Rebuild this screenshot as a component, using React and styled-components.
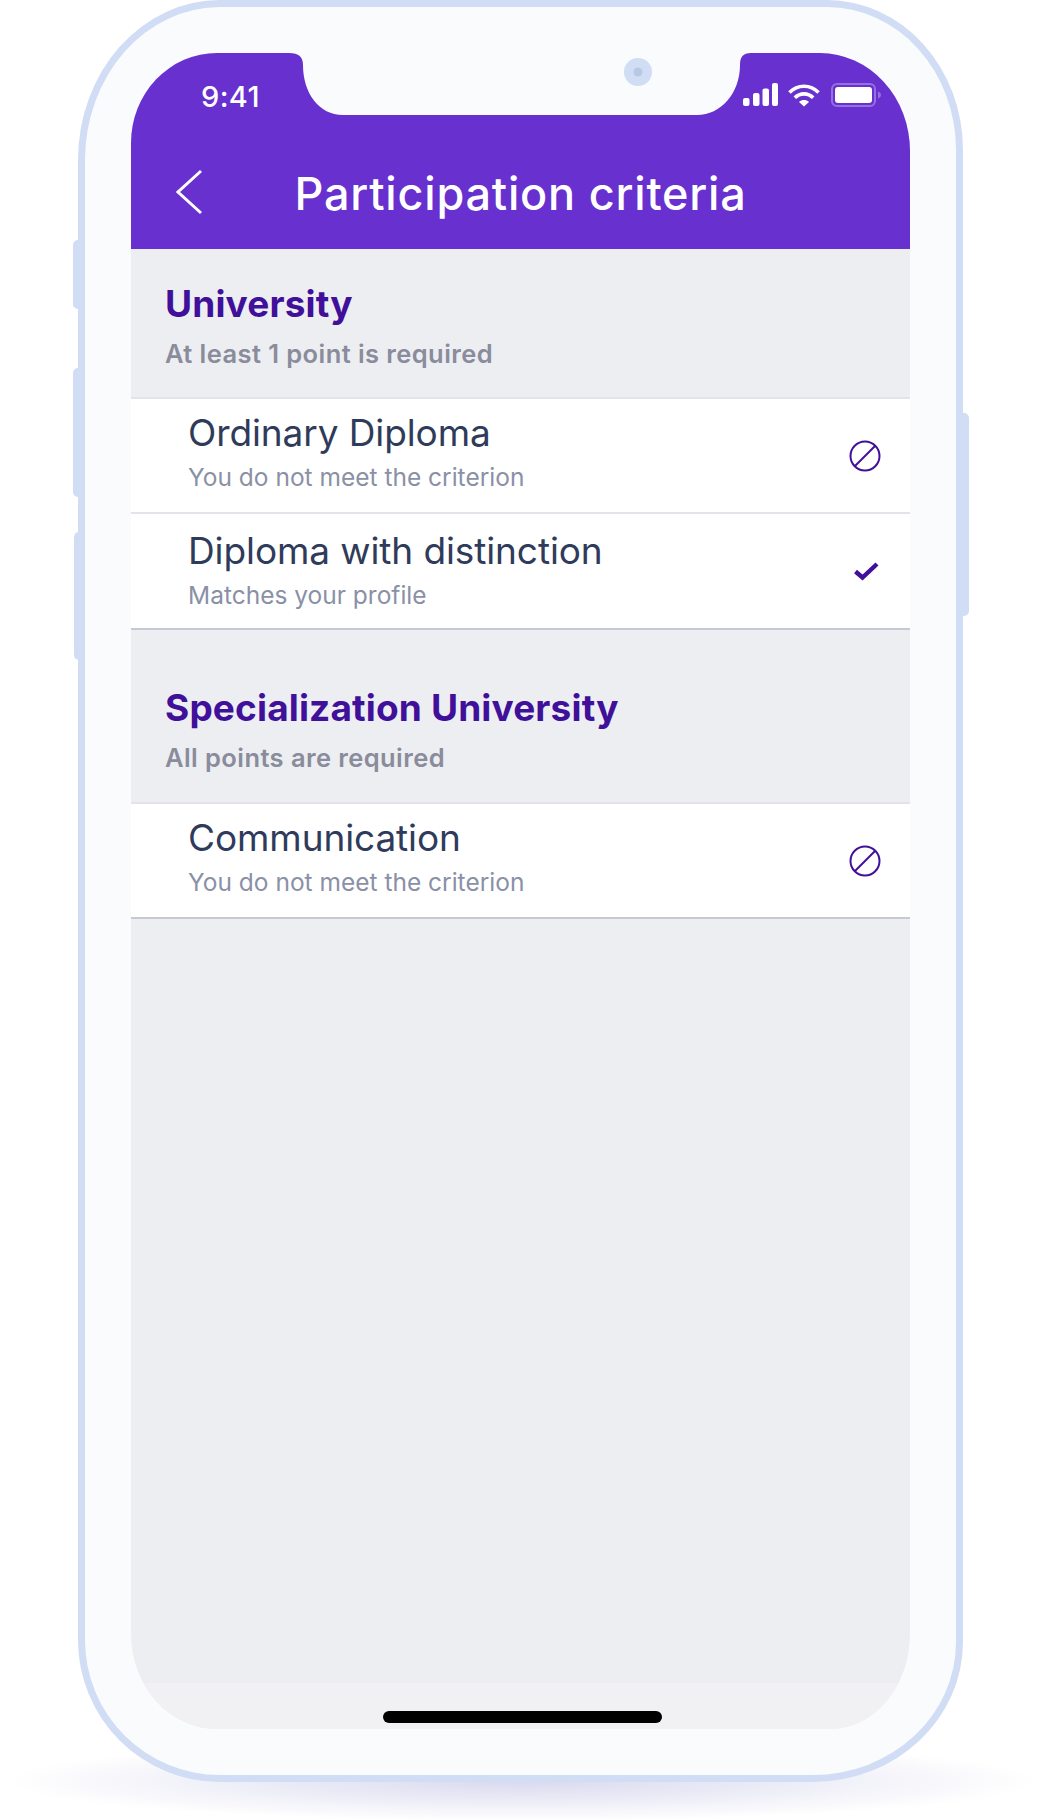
import React from "react";
import styled, { createGlobalStyle } from "styled-components";

const Global = createGlobalStyle`
  html, body { margin: 0; padding: 0; background: #fff; }
  * { box-sizing: border-box; }
`;

const Page = styled.div`
  position: relative;
  width: 1043px;
  height: 1820px;
  overflow: hidden;
  background: #fff;
  padding-left: 78px;
  font-family: Inter, "Liberation Sans", sans-serif;
`;

const GroundShadow = styled.div`
  position: absolute;
  left: 0;
  top: 1730px;
  width: 1043px;
  height: 90px;
  background: radial-gradient(ellipse 515px 40px at 50% 51px, rgba(186, 186, 226, 0.55), rgba(186, 186, 226, 0) 100%);
`;

const SideButton = styled.div`
  position: absolute;
  top: ${(p) => p.$top}px;
  height: ${(p) => p.$height}px;
  width: 12px;
  background: #d0ddf4;
  ${(p) =>
    p.$right
      ? `left: 957px; border-radius: 0 5px 5px 0;`
      : `left: ${p.$left}px; border-radius: 5px 0 0 5px;`}
`;

const Phone = styled.div`
  position: relative;
  width: 885px;
  height: 1782px;
  border: 7px solid #d0ddf4;
  border-radius: 142px 136px 150px 142px / 160px 150px 140px 142px;
  background: #fafbfd;
  padding: 46px;
`;

const Screen = styled.div`
  position: relative;
  height: 100%;
  display: flex;
  flex-direction: column;
  overflow: hidden;
  background: #edeef2;
  border-radius: 86px 90px 80px 86px / 90px 98px 95px 95px;
`;

const Notch = styled.svg`
  position: absolute;
  left: 158px;
  top: 0;
  display: block;
`;

const Header = styled.header`
  flex: none;
  height: 196px;
  background: #6730cf;
  color: #fff;
  display: flex;
  flex-direction: column;
`;

const StatusBar = styled.div`
  height: 62px;
  display: flex;
  justify-content: space-between;
  padding: 30px 29px 0 70px;
`;

const Time = styled.span`
  font-size: 29px;
  line-height: 27px;
  font-weight: 500;
  letter-spacing: 0.4px;
`;

const StatusIcons = styled.div`
  display: flex;
  align-items: flex-start;
`;

const Signal = styled.svg`
  display: block;
  margin-right: 10px;
`;

const Wifi = styled.svg`
  display: block;
  margin-right: 11px;
`;

const Nav = styled.div`
  flex: 1;
  display: grid;
  grid-template-columns: 1fr auto 1fr;
  align-items: center;
  padding-top: 24px;
`;

const Back = styled.svg`
  display: block;
  margin-left: 45px;
  margin-top: -5px;
`;

const Title = styled.h1`
  margin: 0;
  font-size: 45px;
  line-height: 52px;
  font-weight: 500;
  letter-spacing: 0.8px;
  white-space: nowrap;
`;

const Section = styled.section`
  display: flex;
  flex-direction: column;
`;

const SectionHead = styled.div`
  padding: ${(p) => p.$top}px 34px 0;
  height: ${(p) => p.$height}px;
`;

const SectionTitle = styled.h2`
  margin: 0;
  font-size: 37px;
  line-height: 44px;
  font-weight: 700;
  letter-spacing: 0.15px;
  color: #40109a;
  white-space: nowrap;
`;

const SectionSub = styled.div`
  margin-top: 12px;
  font-size: 25.5px;
  line-height: 32px;
  font-weight: 600;
  letter-spacing: 0.42px;
  color: #8a8c9c;
`;

const Row = styled.div`
  height: ${(p) => p.$height}px;
  background: #fff;
  border-top: 2px solid #e3e3ea;
  border-bottom: ${(p) => (p.$last ? "2px solid #c8c8d3" : "none")};
  display: flex;
  align-items: center;
  justify-content: space-between;
  padding: 0 29px 0 57px;
`;

const RowText = styled.div`
  display: flex;
  flex-direction: column;
  padding-bottom: ${(p) => p.$lift}px;
`;

const RowTitle = styled.div`
  font-size: 37px;
  line-height: 44px;
  font-weight: 400;
  letter-spacing: -0.1px;
  color: #2f3b5a;
  white-space: nowrap;
`;

const RowSub = styled.div`
  margin-top: 7px;
  font-size: 24.5px;
  line-height: 31px;
  font-weight: 400;
  color: #8a90a6;
  white-space: nowrap;
`;

const RowIcon = styled.svg`
  display: block;
  flex: none;
`;

const Filler = styled.div`
  flex: 1;
`;

const HomeArea = styled.div`
  flex: none;
  height: 46px;
  background: #f1f1f4;
  display: flex;
  justify-content: center;
  padding: 28px 0 0 4px;
`;

const HomeBar = styled.div`
  width: 279px;
  height: 12px;
  border-radius: 6px;
  background: #000;
`;

const BanIcon = () => (
  <RowIcon width="32" height="32" viewBox="0 0 32 32" fill="none" stroke="#40109a" strokeWidth="2">
    <circle cx="16" cy="16" r="14.5" />
    <path d="M6 26 26 6" />
  </RowIcon>
);

const CheckIcon = () => (
  <RowIcon width="32" height="32" viewBox="0 0 32 32" fill="none" stroke="#40109a" strokeWidth="4.4">
    <path d="M6.500 16.500 13.500 22.500 28 9" />
  </RowIcon>
);

const Item = ({ title, sub, icon, height, last, lift }) => (
  <Row $height={height} $last={last}>
    <RowText $lift={lift}>
      <RowTitle>{title}</RowTitle>
      <RowSub>{sub}</RowSub>
    </RowText>
    {icon === "check" ? <CheckIcon /> : <BanIcon />}
  </Row>
);

export default function App() {
  return (
    <Page>
      <Global />
      <GroundShadow />
      <SideButton $left={73} $top={240} $height={69} />
      <SideButton $left={73} $top={368} $height={129} />
      <SideButton $left={74} $top={532} $height={128} />
      <SideButton $right $top={413} $height={203} />
      <Phone>
        <Screen>
          <Header>
            <StatusBar>
              <Time>9:41</Time>
              <StatusIcons>
                <Signal width="35" height="23" viewBox="0 0 35 23" fill="#fff">
                  <rect x="0" y="15" width="6.5" height="8" rx="2" />
                  <rect x="10" y="10" width="6.5" height="13" rx="2" />
                  <rect x="19.5" y="5.5" width="6.5" height="17.5" rx="2" />
                  <rect x="29" y="0" width="6" height="23" rx="2" />
                </Signal>
                <Wifi width="32" height="24" viewBox="0 0 32 24" fill="none" stroke="#fff" strokeWidth="3.6">
                  <path d="M1.5 9.5C9.5 1.2 22.5 1.2 30.5 9.5" />
                  <path d="M6.8 14.8C12 9.5 20 9.5 25.2 14.8" />
                  <path d="M11 19 16 23.5 21 19C18 16.4 14 16.4 11 19Z" fill="#fff" stroke="none" />
                </Wifi>
                <svg width="50" height="24" viewBox="0 0 50 24" fill="none">
                  <rect x="1" y="1" width="43" height="22" rx="5" stroke="#9470e0" strokeWidth="2" />
                  <rect x="4" y="4" width="37" height="16" rx="3" fill="#fff" />
                  <path d="M47 8.5C49 9.5 50 10.5 50 12S49 14.500 47 15.500Z" fill="#9470e0" />
                </svg>
              </StatusIcons>
            </StatusBar>
            <Nav>
              <Back width="26" height="46" viewBox="0 0 26 46" fill="none" stroke="#fff" strokeWidth="3">
                <path d="M25 2 2 23 25 44" />
              </Back>
              <Title>Participation criteria</Title>
              <span />
            </Nav>
          </Header>
          <Notch width="462" height="62" viewBox="0 0 462 62" fill="#fafbfd">
            <path d="M0 0H462C454 0 451 4 451 12C451 40 432 62 408 62H54C30 62 14 40 14 12C14 4 10 0 0 0Z" />
            <circle cx="349" cy="19" r="14" fill="#d0ddf4" />
            <circle cx="349" cy="19" r="4.500" fill="#b9c8e2" />
          </Notch>
          <Section>
            <SectionHead $top={33} $height={148}>
              <SectionTitle>University</SectionTitle>
              <SectionSub>At least 1 point is required</SectionSub>
            </SectionHead>
            <Item title="Ordinary Diploma" sub="You do not meet the criterion" icon="ban" height={115} lift={8} />
            <Item title="Diploma with distinction" sub="Matches your profile" icon="check" height={118} last lift={3} />
          </Section>
          <Section>
            <SectionHead $top={56} $height={172}>
              <SectionTitle>Specialization University</SectionTitle>
              <SectionSub>All points are required</SectionSub>
            </SectionHead>
            <Item title="Communication" sub="You do not meet the criterion" icon="ban" height={117} last lift={8} />
          </Section>
          <Filler />
          <HomeArea>
            <HomeBar />
          </HomeArea>
        </Screen>
      </Phone>
    </Page>
  );
}
